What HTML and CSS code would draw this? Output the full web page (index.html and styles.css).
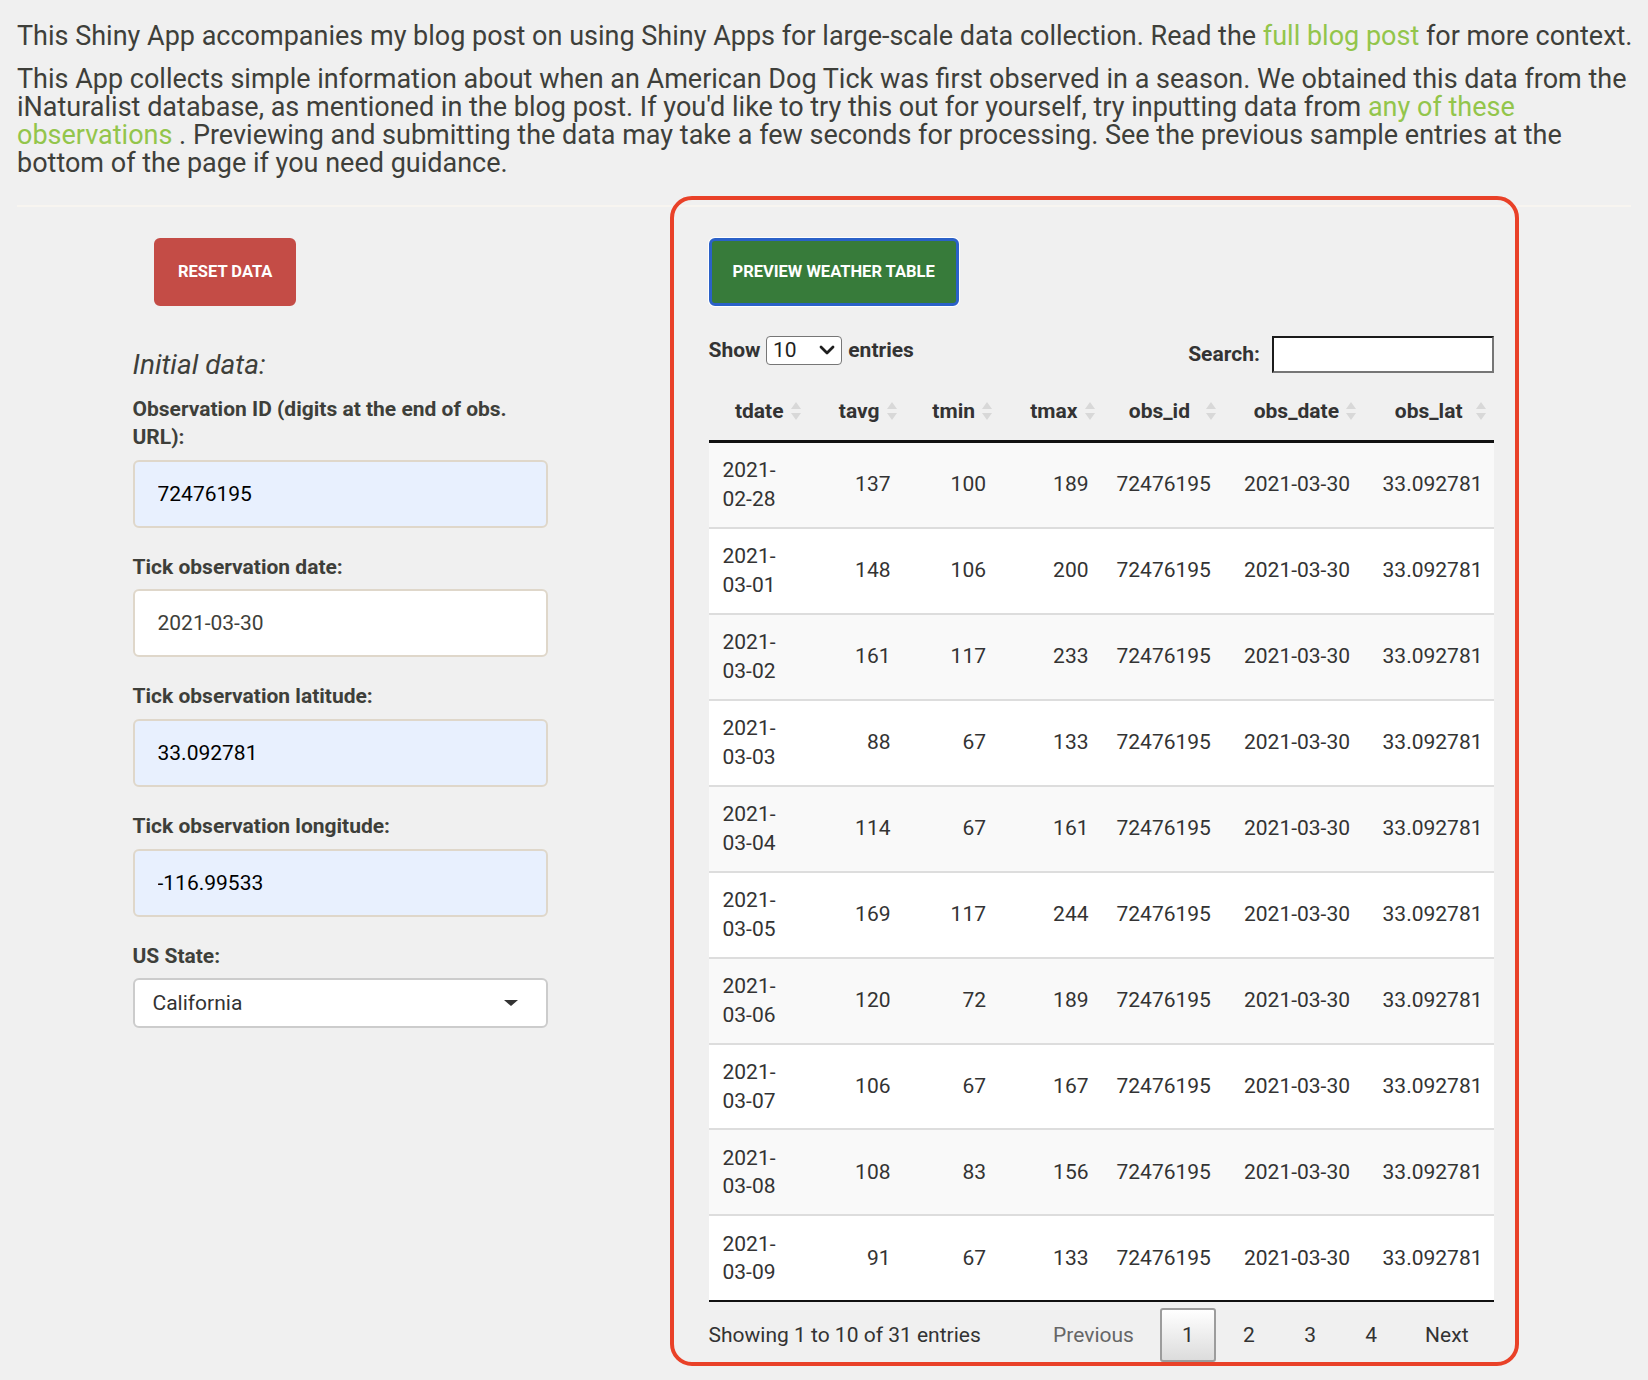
FILE: index.html
```html
<!DOCTYPE html>
<html lang="en">
<head>
<meta charset="utf-8">
<title>Tick observation app</title>
<link rel="stylesheet" href="styles.css">
</head>
<body>
<div class="page">
  <div class="intro">
    <h4 class="intro-text">This Shiny App accompanies my blog post on using Shiny Apps for large-scale data collection. Read the <a class="link" href="#">full blog post</a> for more context.</h4>
    <h4 class="intro-text">This App collects simple information about when an American Dog Tick was first observed in a season. We obtained this data from the iNaturalist database, as mentioned in the blog post. If you'd like to try this out for yourself, try inputting data from <a class="link" href="#">any of these observations</a> . Previewing and submitting the data may take a few seconds for processing. See the previous sample entries at the bottom of the page if you need guidance.</h4>
  </div>
  <hr class="divider">
  <div class="main-row">
    <div class="side">
      <button class="btn btn-reset" type="button">Reset data</button>
      <h4 class="section-title">Initial data:</h4>
      <div class="form-group">
        <label class="field-label">Observation ID (digits at the end of obs. URL):</label>
        <input class="field autofill" type="text" value="72476195" readonly>
      </div>
      <div class="form-group">
        <label class="field-label">Tick observation date:</label>
        <input class="field" type="text" value="2021-03-30" readonly>
      </div>
      <div class="form-group">
        <label class="field-label">Tick observation latitude:</label>
        <input class="field autofill" type="text" value="33.092781" readonly>
      </div>
      <div class="form-group">
        <label class="field-label">Tick observation longitude:</label>
        <input class="field autofill" type="text" value="-116.99533" readonly>
      </div>
      <div class="form-group">
        <label class="field-label">US State:</label>
        <div class="select-box">
          <span>California</span>
          <svg class="caret" width="14" height="6" viewBox="0 0 14 6"><polygon points="0,0 14,0 7,6" fill="#333"/></svg>
        </div>
      </div>
    </div>

    <div class="panel">
      <button class="btn btn-preview" type="button">Preview weather table</button>
      <div class="dt-controls">
        <div class="dt-length">
          <span>Show</span>
          <span class="len-select"><span>10</span>
            <svg width="16" height="12" viewBox="0 0 16 12"><path d="M2 3 L8 9 L14 3" fill="none" stroke="#1e1e1e" stroke-width="2.8" stroke-linecap="round" stroke-linejoin="round"/></svg>
          </span>
          <span>entries</span>
        </div>
        <div class="dt-filter">
          <span>Search:</span>
          <input class="search-box" type="text" aria-label="Search">
        </div>
      </div>

      <table class="dt">
        <colgroup>
          <col class="c-tdate"><col class="c-tavg"><col class="c-tmin"><col class="c-tmax"><col class="c-obsid"><col class="c-obsdate"><col class="c-obslat">
        </colgroup>
        <thead>
          <tr>
            <th>tdate<span class="sort"></span></th>
            <th>tavg<span class="sort"></span></th>
            <th>tmin<span class="sort"></span></th>
            <th>tmax<span class="sort"></span></th>
            <th class="th-obsid">obs_id<span class="sort"></span></th>
            <th>obs_date<span class="sort"></span></th>
            <th class="th-obslat">obs_lat<span class="sort"></span></th>
          </tr>
        </thead>
        <tbody>
          <tr><td class="left">2021-02-28</td><td>137</td><td>100</td><td>189</td><td>72476195</td><td>2021-03-30</td><td>33.092781</td></tr>
          <tr><td class="left">2021-03-01</td><td>148</td><td>106</td><td>200</td><td>72476195</td><td>2021-03-30</td><td>33.092781</td></tr>
          <tr><td class="left">2021-03-02</td><td>161</td><td>117</td><td>233</td><td>72476195</td><td>2021-03-30</td><td>33.092781</td></tr>
          <tr><td class="left">2021-03-03</td><td>88</td><td>67</td><td>133</td><td>72476195</td><td>2021-03-30</td><td>33.092781</td></tr>
          <tr><td class="left">2021-03-04</td><td>114</td><td>67</td><td>161</td><td>72476195</td><td>2021-03-30</td><td>33.092781</td></tr>
          <tr><td class="left">2021-03-05</td><td>169</td><td>117</td><td>244</td><td>72476195</td><td>2021-03-30</td><td>33.092781</td></tr>
          <tr><td class="left">2021-03-06</td><td>120</td><td>72</td><td>189</td><td>72476195</td><td>2021-03-30</td><td>33.092781</td></tr>
          <tr><td class="left">2021-03-07</td><td>106</td><td>67</td><td>167</td><td>72476195</td><td>2021-03-30</td><td>33.092781</td></tr>
          <tr><td class="left">2021-03-08</td><td>108</td><td>83</td><td>156</td><td>72476195</td><td>2021-03-30</td><td>33.092781</td></tr>
          <tr><td class="left">2021-03-09</td><td>91</td><td>67</td><td>133</td><td>72476195</td><td>2021-03-30</td><td>33.092781</td></tr>
        </tbody>
      </table>

      <div class="dt-footer">
        <div class="dt-info">Showing 1 to 10 of 31 entries</div>
        <div class="dt-paginate">
          <span class="pg-btn disabled">Previous</span>
          <span class="pg-btn current">1</span>
          <span class="pg-btn">2</span>
          <span class="pg-btn">3</span>
          <span class="pg-btn">4</span>
          <span class="pg-btn">Next</span>
        </div>
      </div>
    </div>
  </div>
</div>
</body>
</html>
```

FILE: styles.css
```css
* { box-sizing: border-box; }

html, body {
  margin: 0;
  padding: 0;
}

body {
  background: #f0f0f0;
  font-family: Roboto, "Liberation Sans", sans-serif;
  font-size: 21px;
  line-height: 28.6px;
  color: #3e3f3a;
}

.page {
  padding: 0 8px 0 17px;
}

.intro {
  width: 1623px;
}

.intro-text {
  font-size: 27px;
  line-height: 28.3px;
  font-weight: 400;
  margin: 22px 0 0;
}

.intro-text + .intro-text {
  margin-top: 14.3px;
}

.link {
  color: #93c54b;
  text-decoration: none;
}

.divider {
  width: 1614px;
  border: 0;
  border-top: 2px solid #f8f5f0;
  margin: 27.6px 0 0;
  height: 0;
}

.main-row {
  display: flex;
  align-items: flex-start;
  margin-top: 28.2px;
}

/* ---------- left side ---------- */
.side {
  width: 652.5px;
  flex: none;
  padding: 2.5px 122px 0 115.5px;
}

.btn {
  display: inline-flex;
  align-items: center;
  justify-content: center;
  height: 67.5px;
  padding: 0 21px;
  border-radius: 6px;
  font-family: Roboto, "Liberation Sans", sans-serif;
  font-size: 16.5px;
  font-weight: 700;
  text-transform: uppercase;
  color: #fff;
  cursor: pointer;
}

.btn-reset {
  margin-left: 21.5px;
  background: #c44c46;
  border: 3px solid #c44c46;
}

.section-title {
  margin: 45px 0 15.7px;
  font-size: 28px;
  line-height: 28.3px;
  font-weight: 400;
  font-style: italic;
}

.form-group {
  margin-bottom: 25px;
}

.field-label {
  display: block;
  font-weight: 700;
  margin-bottom: 8px;
}

.field {
  display: block;
  width: 100%;
  height: 68px;
  padding: 0 23px;
  border: 2px solid #dfd7ca;
  border-radius: 6px;
  background: #fff;
  font-family: Roboto, "Liberation Sans", sans-serif;
  font-size: 21px;
  color: #3e3f3a;
  outline: none;
}

.field.autofill {
  background: #e8f0fe;
  color: #000;
}

.select-box {
  display: flex;
  align-items: center;
  justify-content: space-between;
  height: 50px;
  padding: 0 28px 0 18px;
  background: #fff;
  border: 2px solid #cccccc;
  border-radius: 6px;
  color: #333;
}

.caret {
  display: block;
}

/* ---------- right panel ---------- */
.panel {
  width: 849.5px;
  flex: none;
  margin-top: -39.5px;
  border: 4px solid #e94128;
  border-radius: 22px;
  padding: 38px 21.5px 0 35px;
}

.btn-preview {
  background: #377b3a;
  border: 3px solid #2b61c8;
  box-shadow: 0 0 0 1px #ffffff;
  padding: 0 21px;
}

.dt-controls {
  display: flex;
  justify-content: space-between;
  align-items: flex-start;
  margin-top: 30px;
  font-weight: 700;
  color: #333;
}

.dt-length {
  display: flex;
  align-items: center;
  height: 28.3px;
  margin-top: 0.7px;
}

.len-select {
  display: inline-flex;
  align-items: center;
  justify-content: space-between;
  width: 76.3px;
  height: 28.3px;
  margin: 0 6px 0 5.5px;
  padding: 0 6px 0 6px;
  border: 1.5px solid #767676;
  border-radius: 4px;
  background: #fff;
  font-weight: 400;
  color: #1e1e1e;
}

.len-select svg {
  display: block;
}

.dt-filter {
  display: flex;
  align-items: center;
  height: 37.3px;
}

.search-box {
  width: 221.7px;
  height: 37.3px;
  margin-left: 12px;
  border: 2px solid;
  border-color: #1b1b1b #767676 #767676 #1b1b1b;
  background: #fff;
  font-family: inherit;
  font-size: 21px;
  padding: 0 4px;
  outline: none;
}

.dt {
  width: 785px;
  margin-top: 9.7px;
  table-layout: fixed;
  border-collapse: separate;
  border-spacing: 0;
  border-bottom: 2px solid #111;
  color: #333;
}

.c-tdate { width: 100px; }
.c-tavg { width: 96px; }
.c-tmin { width: 95.5px; }
.c-tmax { width: 102.5px; }
.c-obsid { width: 121.5px; }
.c-obsdate { width: 140px; }
.c-obslat { width: 129.5px; }

.dt th {
  position: relative;
  padding: 14.3px 25px 14.3px 8px;
  text-align: right;
  font-weight: 700;
  color: #333;
  border-bottom: 3px solid #111;
  white-space: nowrap;
}

.dt th.th-obsid {
  padding-right: 34px;
}

.dt th.th-obslat {
  padding-right: 31px;
}

.sort {
  position: absolute;
  right: 7px;
  top: 50%;
  width: 11px;
  height: 20px;
  margin-top: -10px;
}

.sort::before,
.sort::after {
  content: "";
  position: absolute;
  left: 0;
  width: 0;
  height: 0;
  border-left: 5.5px solid transparent;
  border-right: 5.5px solid transparent;
}

.sort::before {
  top: 1px;
  border-bottom: 7.5px solid #d8d8d8;
}

.sort::after {
  bottom: 1px;
  border-top: 7.5px solid #d8d8d8;
}

.dt td {
  padding: 13.4px 14px;
  text-align: right;
  vertical-align: middle;
  background: #fff;
}

.dt td:last-child {
  padding-right: 11px;
}

.dt td.left {
  text-align: left;
}

.dt tbody tr:nth-child(odd) td {
  background: #f9f9f9;
}

.dt tbody tr + tr td {
  border-top: 2px solid #dddddd;
}

.dt-footer {
  display: flex;
  justify-content: space-between;
  align-items: center;
  margin-top: 5.5px;
  color: #333;
}

.dt-paginate {
  display: flex;
  margin-right: 4px;
}

.pg-btn {
  display: inline-flex;
  align-items: center;
  justify-content: center;
  height: 54px;
  min-width: 56.3px;
  padding: 0 20px;
  margin-left: 4.8px;
  border: 1px solid transparent;
  border-radius: 3px;
  color: #333;
}

.pg-btn.disabled {
  color: #666;
}

.pg-btn.current {
  border: 2px solid #9c9c9c;
  background: linear-gradient(to bottom, #ffffff 0%, #dcdcdc 100%);
}
```
